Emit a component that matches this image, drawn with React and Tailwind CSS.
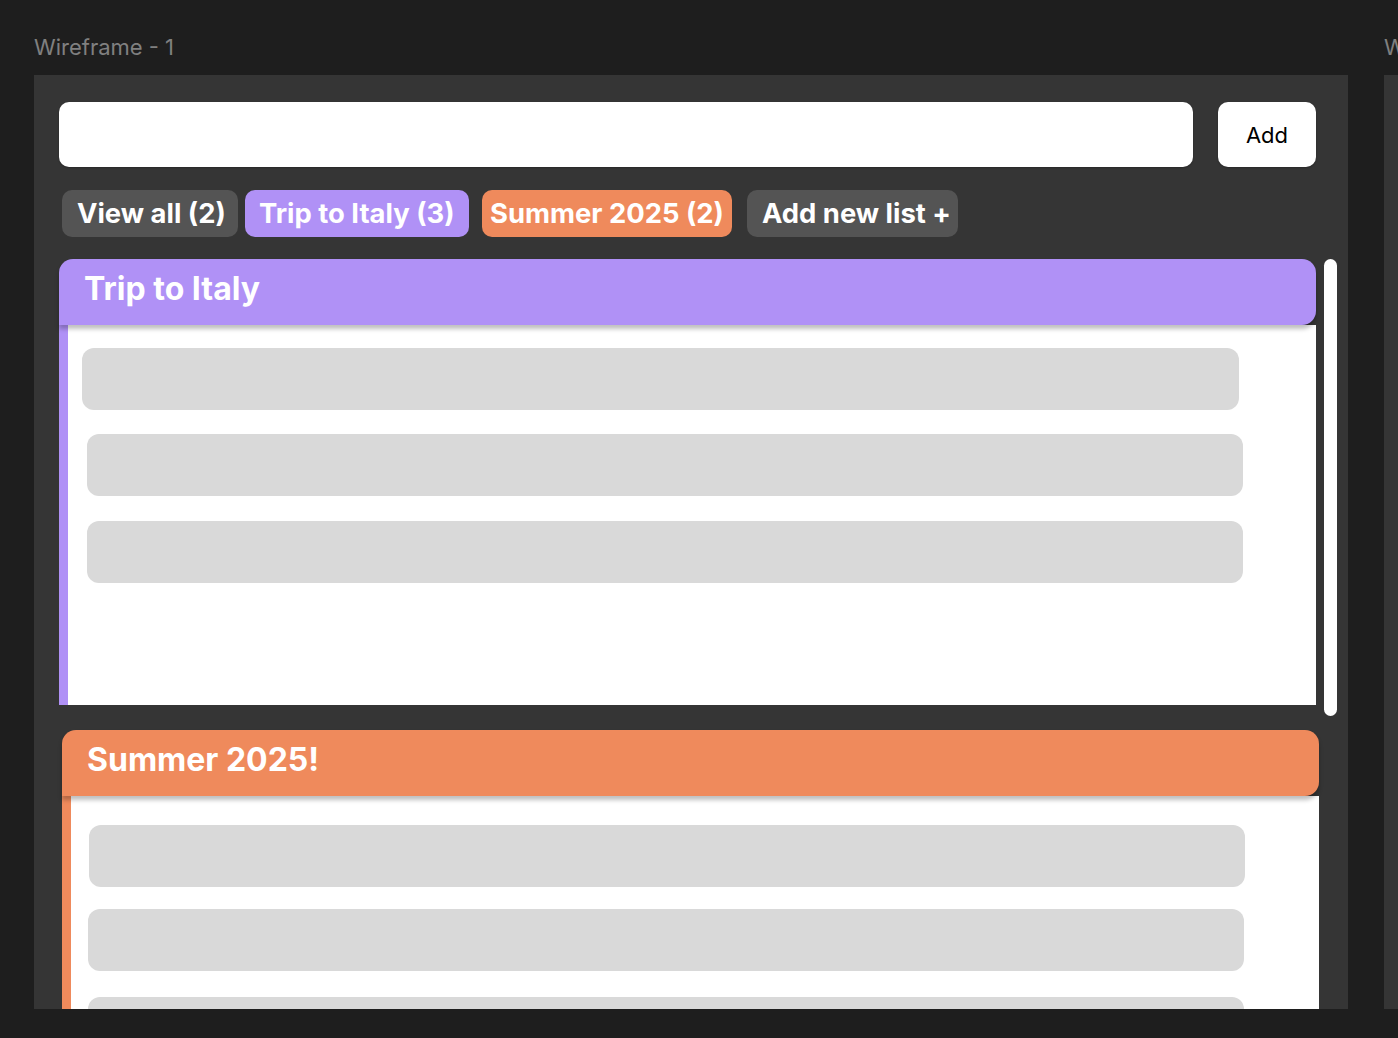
import React from "react";

const font = { fontFamily: "Inter, 'Noto Sans', sans-serif" };

function Row({ className }) {
  return <div className={`h-[62px] w-[1156px] rounded-[12px] bg-[#d9d9d9] ${className}`} />;
}

export default function App() {
  return (
    <div style={font} className="w-[1398px] h-[1038px] bg-[#1e1e1e] overflow-hidden flex">
      {/* Frame 1 */}
      <div className="ml-[34px] pt-[34px] flex flex-col shrink-0">
        <div className="text-[22px] leading-[27px] text-[#808080]">Wireframe - 1</div>
        <div className="mt-[14px] w-[1314px] h-[934px] bg-[#353535] overflow-hidden pl-[25px] pt-[27px]">
          {/* Input row */}
          <div className="flex">
            <div className="w-[1134px] h-[65px] bg-white rounded-[10px] shadow-[0_1px_2px_rgba(0,0,0,0.25)]" />
            <button className="ml-[25px] w-[98px] h-[65px] bg-white rounded-[10px] shadow-[0_1px_2px_rgba(0,0,0,0.25)] text-[22px] text-black flex items-center justify-center pt-[1px]">
              Add
            </button>
          </div>
          {/* Tabs */}
          <div className="flex mt-[23px] ml-[3px] text-[27.4px] font-bold text-white">
            <div className="w-[176px] h-[47px] rounded-[10px] bg-[#545454] flex items-center pl-[15px] whitespace-nowrap">View all (2)</div>
            <div className="ml-[7px] w-[224px] h-[47px] rounded-[10px] bg-[#b091f6] flex items-center pl-[14px] whitespace-nowrap">Trip to Italy (3)</div>
            <div className="ml-[13px] w-[250px] h-[47px] rounded-[10px] bg-[#ef8a5c] flex items-center pl-[8px] whitespace-nowrap">Summer 2025 (2)</div>
            <div className="ml-[15px] w-[211px] h-[47px] rounded-[10px] bg-[#545454] flex items-center pl-[15px] whitespace-nowrap">Add new list +</div>
          </div>
          {/* Lists */}
          <div className="flex mt-[22px]">
            <div className="w-[1260px] flex flex-col">
              {/* Card 1 */}
              <div className="w-[1257px] flex flex-col">
                <div className="relative z-10 h-[66px] bg-[#b091f6] rounded-t-[14px] rounded-br-[14px] shadow-[0_4px_4px_rgba(0,0,0,0.25)] pl-[25px] pt-[10px]">
                  <div className="text-[32px] leading-[39px] font-bold text-white">Trip to Italy</div>
                </div>
                <div className="flex h-[380px]">
                  <div className="w-[9px] bg-[#b091f6]" />
                  <div className="flex-1 bg-white flex flex-col">
                    <Row className="ml-[14px] mt-[23px] w-[1157px]" />
                    <Row className="ml-[19px] mt-[24px]" />
                    <Row className="ml-[19px] mt-[25px]" />
                  </div>
                </div>
              </div>
              {/* Card 2 */}
              <div className="w-[1257px] ml-[3px] mt-[25px] flex flex-col">
                <div className="relative z-10 h-[66px] bg-[#ef8a5c] rounded-t-[14px] rounded-br-[14px] shadow-[0_4px_4px_rgba(0,0,0,0.25)] pl-[25px] pt-[10px]">
                  <div className="text-[32px] leading-[39px] font-bold text-white">Summer 2025!</div>
                </div>
                <div className="flex h-[380px]">
                  <div className="w-[9px] bg-[#ef8a5c]" />
                  <div className="flex-1 bg-white flex flex-col">
                    <Row className="ml-[18px] mt-[29px]" />
                    <Row className="ml-[17px] mt-[22px] h-[61px]" />
                    <Row className="ml-[17px] mt-[26px]" />
                  </div>
                </div>
              </div>
            </div>
            <div className="ml-[5px] w-[13px] h-[457px] bg-white rounded-full" />
          </div>
        </div>
      </div>
      {/* Frame 2 (partial) */}
      <div className="ml-[36px] pt-[34px] flex flex-col shrink-0">
        <div className="text-[22px] leading-[27px] text-[#808080] whitespace-nowrap">Wireframe - 2</div>
        <div className="mt-[14px] w-[400px] h-[934px] bg-[#353535]" />
      </div>
    </div>
  );
}
